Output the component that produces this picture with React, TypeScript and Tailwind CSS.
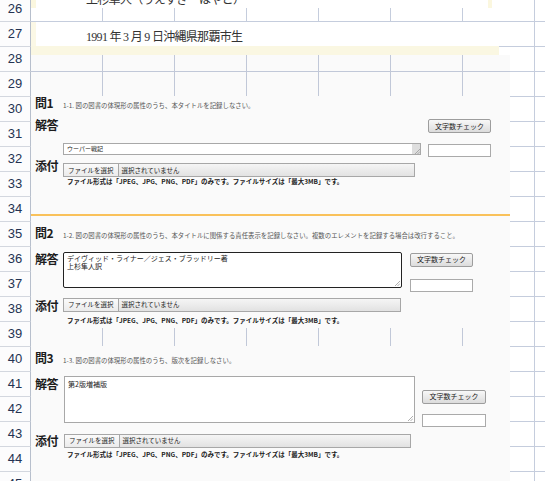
import React from "react";

const ROWS = Array.from({ length: 20 }, (_, i) => 26 + i);
const CELLS = Array.from({ length: 8 }, (_, i) => i);

function Grip() {
  return (
    <svg width="6" height="6" viewBox="0 0 6 6" className="block">
      <path d="M6 1 L1 6 M6 3.5 L3.5 6" stroke="#9a9a9a" strokeWidth="0.8" />
    </svg>
  );
}

function Label({ children, className = "" }: { children: React.ReactNode; className?: string }) {
  return (
    <div
      className={`w-[32px] shrink-0 pl-[4px] text-[12px] font-bold leading-[13px] tracking-[-0.5px] text-[#1c1c1c] ${className}`}
    >
      {children}
    </div>
  );
}

function CheckButton({ className = "" }: { className?: string }) {
  return (
    <div
      className={`flex h-[14px] items-center justify-center rounded-[2px] border border-[#9d9d9d] bg-linear-to-b from-[#f8f8f8] to-[#dcdcdc] text-[7px] leading-none text-[#222] ${className}`}
    >
      文字数チェック
    </div>
  );
}

function FileBar({ className = "" }: { className?: string }) {
  return (
    <div
      className={`flex h-[14px] items-stretch border border-[#a7a7a7] bg-linear-to-b from-[#f5f5f5] to-[#e2e2e2] ${className}`}
    >
      <div className="flex items-center border-r border-[#a7a7a7] bg-linear-to-b from-[#fbfbfb] to-[#ebebeb] px-[4px] text-[6.5px] leading-none text-[#222]">
        ファイルを選択
      </div>
      <div className="flex items-center pl-[3px] text-[6.5px] leading-none text-[#222]">選択されていません</div>
    </div>
  );
}

function Note({ className = "" }: { className?: string }) {
  return (
    <div className={`pl-[36px] text-[6.5px] font-bold leading-[8px] text-[#222] ${className}`}>
      ファイル形式は「JPEG、JPG、PNG、PDF」のみです。ファイルサイズは「最大3MB」です。
    </div>
  );
}

function QHead({ num, desc, className = "" }: { num: string; desc: string; className?: string }) {
  return (
    <div className={`flex items-baseline ${className}`}>
      <Label>問{num}</Label>
      <div className="text-[6.4px] text-[#555]">{desc}</div>
    </div>
  );
}

function Grid() {
  return (
    <div className="-mt-[3px] flex flex-col">
      {ROWS.map((r) => (
        <div key={r} className="flex h-[25px] shrink-0">
          <div className="flex w-[31px] shrink-0 items-center justify-center border-r border-b border-r-[#b7bfcc] border-b-[#d3d7df] bg-[#fcfcfd] font-['Liberation_Sans',sans-serif] text-[13px] text-[#243352]">
            {r}
          </div>
          {CELLS.map((c) => (
            <div key={c} className="w-[72px] shrink-0 border-r border-b border-[#c5cddd]" />
          ))}
        </div>
      ))}
    </div>
  );
}

export default function App() {
  return (
    <div className="relative h-[481px] w-[545px] overflow-hidden bg-white">
      <Grid />
      <div className="absolute left-[31px] top-0 flex w-[479px] flex-col font-['Noto_Sans_CJK_JP',sans-serif]">
        {/* upper card, cut off */}
        <div className="h-[8px] w-[461px] shrink-0 overflow-hidden border-l-[5px] border-r-[4px] border-[#fbf7df] bg-white">
          <div className="-mt-[7px] pl-[50px] font-['Liberation_Serif','Noto_Sans_CJK_JP',serif] text-[12px] leading-[14px] tracking-[-0.7px] text-[#333]">
            上杉隼人（うえすぎ・はやと）
          </div>
        </div>
        <div className="h-[14px] shrink-0" />
        {/* card with birth info */}
        <div className="flex h-[33px] w-[468px] shrink-0 flex-col bg-white">
          <div className="h-[24px] border-l-[5px] border-[#fbf8e6] pl-[50px] pt-[8px] font-['Liberation_Serif','Noto_Sans_CJK_JP',serif] text-[12px] leading-[14px] tracking-[-0.7px] text-[#333]">
            1991 年 3 月 9 日沖縄県那覇市生
          </div>
          <div className="h-[9px] bg-[#faf7e2]" />
        </div>
        <div className="h-[41px] shrink-0 bg-black/[0.02]" />

        {/* Question 1 */}
        <div className="flex h-[118px] shrink-0 flex-col bg-[#fafafa]">
          <QHead num="1" desc="1-1. 図の図書の体現形の属性のうち、本タイトルを記録しなさい。" className="h-[13px]" />
          <div className="mt-[9px] flex items-start">
            <Label>解答</Label>
            <div className="mt-[25px] flex h-[12px] w-[358px] border border-[#a8a8a8] bg-white">
              <div className="flex-1 pl-[3px] pt-[1px] text-[6px] leading-[8px] text-[#222]">ウーパー戦記</div>
              <div className="flex w-[8px] items-end justify-end bg-[#dedede]">
                <Grip />
              </div>
            </div>
            <div className="ml-[7px] flex flex-col">
              <CheckButton className="mt-[1px] w-[63px]" />
              <div className="mt-[11px] h-[13px] w-[63px] border border-[#aaa] bg-white" />
            </div>
          </div>
          <div className="flex items-start">
            <Label className="mt-[2px]">添付</Label>
            <FileBar className="mt-[6px] w-[352px]" />
          </div>
          <Note />
        </div>

        <div className="h-[2px] shrink-0 bg-[#f9c15a]" />

        {/* Question 2 */}
        <div className="flex h-[112px] shrink-0 flex-col bg-[#fafafa]">
          <QHead
            num="2"
            desc="1-2. 図の図書の体現形の属性のうち、本タイトルに関係する責任表示を記録しなさい。複数のエレメントを記録する場合は改行すること。"
            className="mt-[10px]"
          />
          <div className="mt-[11px] flex items-start">
            <Label>解答</Label>
            <div className="relative flex h-[36px] w-[339px] flex-col rounded-[2px] border border-[#222] bg-white px-[3px] pt-[1px] text-[7px] leading-[8px] text-[#222]">
              <div className="h-[8px]">デイヴィッド・ライナー／ジェス・ブラッドリー著</div>
              <div className="h-[8px]">上杉隼人訳</div>
              <div className="absolute bottom-[1px] right-[1px]">
                <Grip />
              </div>
            </div>
            <div className="ml-[8px] flex flex-col">
              <CheckButton className="mt-[1px] w-[63px]" />
              <div className="mt-[12px] h-[13px] w-[63px] border border-[#aaa] bg-white" />
            </div>
          </div>
          <div className="flex items-start">
            <Label className="mt-[7px]">添付</Label>
            <FileBar className="mt-[6px] w-[338px]" />
          </div>
          <Note className="mt-[4px]" />
        </div>

        <div className="h-[18px] shrink-0 bg-black/[0.02]" />

        {/* Question 3 */}
        <div className="flex h-[140px] shrink-0 flex-col bg-[#fafafa]">
          <QHead num="3" desc="1-3. 図の図書の体現形の属性のうち、版次を記録しなさい。" className="mt-[5px]" />
          <div className="mt-[10px] flex items-start">
            <Label className="mt-[1px]">解答</Label>
            <div className="relative ml-[1px] h-[47px] w-[351px] border border-[#a8a8a8] bg-white px-[3px] pt-[3px] text-[7px] leading-[8px] text-[#222]">
              第2版増補版
              <div className="absolute bottom-[1px] right-[1px]">
                <Grip />
              </div>
            </div>
            <div className="ml-[7px] flex flex-col">
              <CheckButton className="mt-[14px] w-[64px]" />
              <div className="mt-[10px] h-[13px] w-[64px] border border-[#aaa] bg-white" />
            </div>
          </div>
          <div className="flex items-start">
            <Label className="mt-[7px]">添付</Label>
            <FileBar className="ml-[1px] mt-[7px] w-[347px]" />
          </div>
          <Note className="mt-[2px]" />
        </div>
      </div>
    </div>
  );
}
